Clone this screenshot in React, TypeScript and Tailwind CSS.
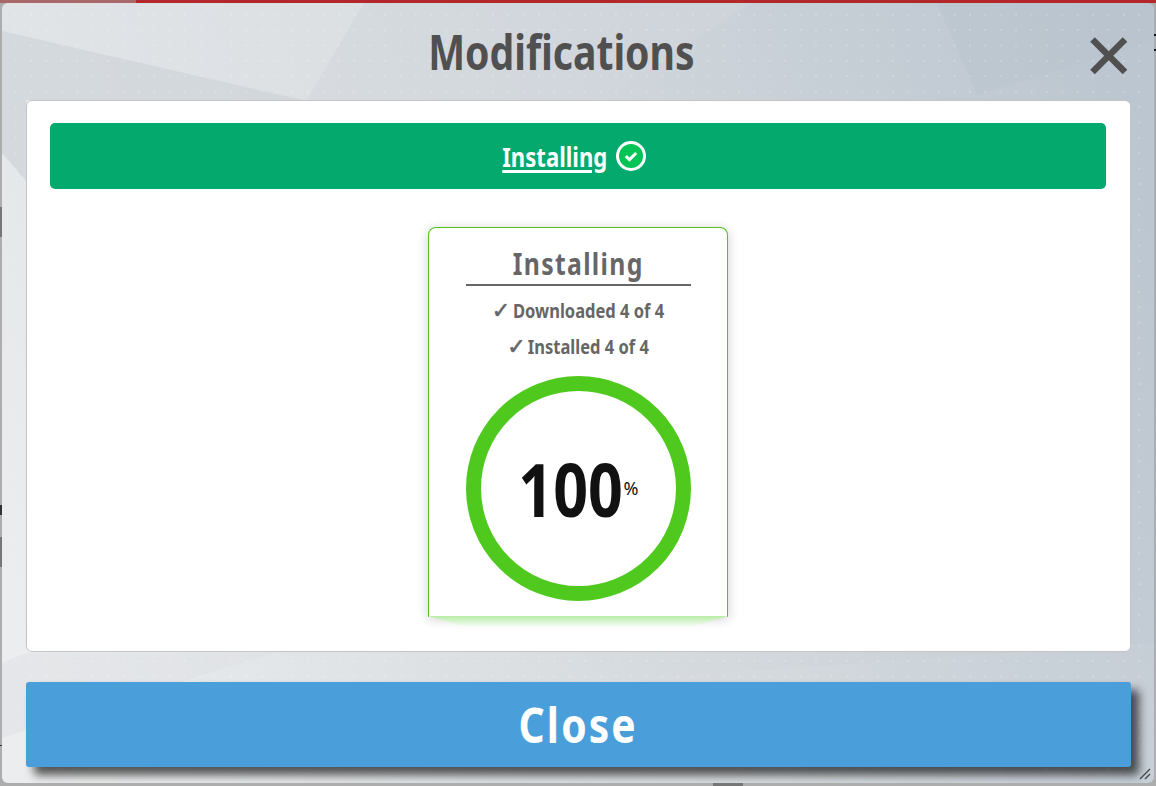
import React from "react";

function Cond({ w, className = "", children }: { w: number; className?: string; children: React.ReactNode }) {
  return (
    <span className="inline-flex justify-center whitespace-nowrap" style={{ width: w }}>
      <span className={`inline-block shrink-0 ${className}`}>{children}</span>
    </span>
  );
}

function Background() {
  return (
    <svg className="absolute inset-0 h-full w-full" viewBox="0 0 1152 780" preserveAspectRatio="none" aria-hidden="true">
      <defs>
        <linearGradient id="bg" gradientUnits="userSpaceOnUse" x1="0" y1="600" x2="1152" y2="180">
          <stop offset="0" stopColor="#ebedee" />
          <stop offset="0.5" stopColor="#d5dade" />
          <stop offset="1" stopColor="#bcc6d0" />
        </linearGradient>
      </defs>
      <rect width="1152" height="780" fill="url(#bg)" />
      <polygon points="0,0 362,0 305,97 0,28" fill="#dfe2e6" opacity="0.55" />
      <polygon points="0,28 300,97 0,97" fill="#cfd4d9" opacity="0.75" />
      <polygon points="0,97 24,97 24,178 0,150" fill="#cfd4d9" opacity="0.75" />
      <polygon points="362,0 305,97 600,97 750,0" fill="#d3d8dd" opacity="0.45" />
      <polygon points="935,0 1152,0 1152,38 975,92" fill="#b2bdc8" opacity="0.22" />
      <polygon points="0,735 270,650 24,650 0,660" fill="#dde0e3" opacity="0.5" />
      <polygon points="0,735 60,715 1152,640 1152,780 0,780" fill="#ffffff" opacity="0.05" />
    </svg>
  );
}

export default function App() {
  return (
    <div className="relative h-[786px] w-[1156px] overflow-hidden bg-[#adadad] font-['Noto_Sans',sans-serif]">
      <div className="flex h-[3px]">
        <div className="w-[136px] bg-[#a8686a]" />
        <div className="flex-1 bg-[#b3262a]" />
      </div>
      <div className="relative mx-[2px] h-[780px] w-[1152px] overflow-hidden rounded-[6px] pt-[97px]">
        <Background />
        <div className="absolute inset-0 bg-[radial-gradient(circle,rgba(255,255,255,0.22)_1px,transparent_1.3px)] bg-[length:15.4px_15.4px] bg-[position:6px_4px]" />
        <h1 className="absolute left-[426px] top-[21px] w-[266px] text-center text-[48px] leading-[56px] font-bold text-[#505050]">
          <Cond w={266} className="scale-x-[0.815]">Modifications</Cond>
        </h1>
        <button className="absolute left-[1087px] top-[33px] h-[40px] w-[40px]" aria-label="Close">
          <svg viewBox="0 0 40 40" className="h-full w-full">
            <path d="M3.5 3.5 L36 36 M36 3.5 L3.5 36" stroke="#505050" strokeWidth="6.5" fill="none" />
          </svg>
        </button>

        <main className="relative ml-[24px] flex h-[552px] w-[1105px] flex-col items-start rounded-[6px] border border-[#c4c4c4] bg-white pt-[22px]">
          <div className="ml-[23px] flex h-[66px] w-[1056px] items-center justify-center gap-[9px] rounded-[5px] bg-[#04a96d] pr-[7px] text-[26px] font-bold text-white">
            <Cond w={104} className="translate-y-[1px] scale-x-[0.85] underline decoration-[3px] underline-offset-[3px]">Installing</Cond>
            <svg viewBox="0 0 30 30" className="h-[30px] w-[30px]">
              <circle cx="15" cy="15" r="13.5" fill="#03c455" stroke="#fff" strokeWidth="3" />
              <path d="M9.8 15.2 L13.5 18.6 L20.2 12" stroke="#fff" strokeWidth="3" fill="none" />
            </svg>
          </div>

          <section className="relative ml-[401px] mt-[38px] flex h-[390px] w-[300px] flex-col items-center rounded-t-[8px] border border-b-0 border-[#55c31f] bg-white pt-[16px] shadow-[0_2px_12px_rgba(0,0,0,0.2)]">
            <h2 className="w-[225px] border-b-2 border-[#666] pb-[1px] text-center text-[30px] leading-[39px] font-bold tracking-[1.6px] text-[#666]">
              <Cond w={129} className="scale-x-[0.825]">Installing</Cond>
            </h2>
            <p className="mt-[7px] flex items-center gap-[3px] text-[20px] leading-[36px] font-bold text-[#666]">
              <span className="font-['DejaVu_Sans'] text-[22px] font-bold [-webkit-text-stroke:0.6px_#666]">✓</span>
              <Cond w={151} className="scale-x-[0.825]">Downloaded 4 of 4</Cond>
            </p>
            <p className="flex items-center gap-[3px] text-[20px] leading-[36px] font-bold text-[#666]">
              <span className="font-['DejaVu_Sans'] text-[22px] font-bold [-webkit-text-stroke:0.6px_#666]">✓</span>
              <Cond w={120} className="scale-x-[0.825]">Installed 4 of 4</Cond>
            </p>
            <div className="mt-[11px] flex h-[225px] w-[225px] items-center justify-center rounded-full border-[15px] border-[#50c91f] pl-[2px]">
              <Cond w={103} className="scale-x-[0.835] text-[73px] leading-none font-bold text-[#111]">100</Cond>
              <Cond w={16} className="ml-[1px] text-[18px] text-[#111]">%</Cond>
            </div>
            <div className="absolute -bottom-[11px] -left-px -right-px h-[12px] bg-gradient-to-b from-[#b8eca6] to-white [clip-path:polygon(0_0,100%_0,86%_100%,14%_100%)]" />
          </section>
        </main>

        <button className="relative ml-[24px] mt-[30px] block h-[85px] w-[1105px] rounded-[3px] bg-[#4a9fdb] text-[48px] font-bold tracking-[2.5px] text-white shadow-[8px_8px_10px_rgba(0,0,0,0.65)]">
          <Cond w={117} className="scale-x-[0.85]">Close</Cond>
        </button>
        <svg className="absolute bottom-[3px] right-[3px] h-[12px] w-[12px]" viewBox="0 0 12 12">
          <path d="M1 11 L11 1 M6 11 L11 6" stroke="#444" strokeWidth="1.3" />
        </svg>
      </div>
      <div className="absolute left-0 top-[207px] h-[30px] w-[2px] bg-[#777]" />
      <div className="absolute left-0 top-[537px] h-[30px] w-[2px] bg-[#777]" />
      <div className="absolute left-0 top-[505px] h-[10px] w-[2px] bg-[#333]" />
      <div className="absolute left-0 top-[745px] h-px w-[2px] bg-[#333]" />
      <div className="absolute right-0 top-[34px] h-[2px] w-[2px] bg-[#111]" />
      <div className="absolute right-0 top-[49px] h-[2px] w-[2px] bg-[#111]" />
      <div className="absolute bottom-0 left-[713px] h-[3px] w-[30px] bg-[#777]" />
    </div>
  );
}
